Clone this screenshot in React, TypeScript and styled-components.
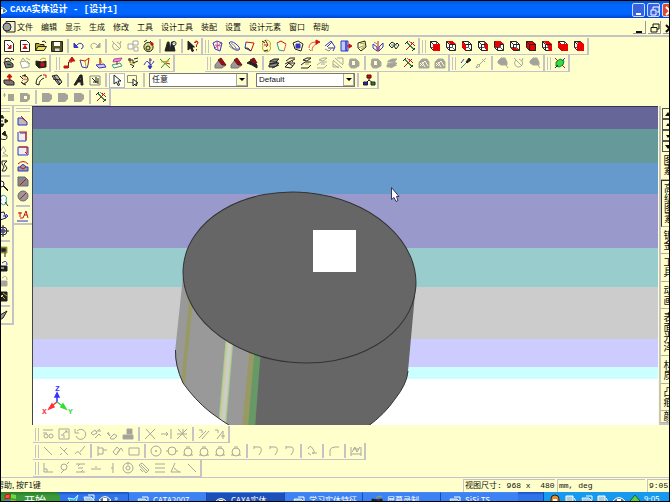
import React from "react";
import styled, { createGlobalStyle, css } from "styled-components";

const cream = "#ffffcc";
const edge = "#c6c3c6";
const cjk = `"Noto Sans CJK SC", sans-serif`;

const GlobalStyle = createGlobalStyle`
  * { box-sizing: border-box; }
  body { margin: 0; background: #000; overflow: hidden; }
  button, select { font: inherit; color: inherit; margin: 0; padding: 0; border: 0; background: none; border-radius: 0; }
`;

/* ---------- icons: [stroke, fill, path] on a 14 x 14 grid ---------- */
type Shape = [string, string, string];
const K = "#222222";
const R = "#cc1111";
const B = "#3333cc";
const G = "#888888";
const Y = "#b5a520";
const M = "#7a1020";
const C = "#2a9aa5";
const O = "#ee5544";
const N = "none";
const W = "#ffffff";

const wire: Shape = [K, N, "M2.500 2.500H8.500L11.500 5.500V11.500H5.500L2.500 8.500ZM2.500 2.500L5.500 5.500H11.500M5.500 5.500V11.500"];
const cube = (...faces: string[]): Shape[] => [
  [N, W, "M2 2H8L12 5V12H6L2 8Z"],
  ["#555555", N, "M8.500 2.500V8.500H2.500M8.500 8.500L11.500 11.500"],
  wire,
  ...faces.map((d): Shape => [N, "#ee0000", d]),
];
const front = "M5 5H12V12H5Z";
const top = "M3 2H8L12 5H6Z";
const left = "M2 3L6 6V12L2 8Z";
const right = "M9 3L12 6V12L9 9Z";
const back = "M3 3H8V8H3Z";
const base = "M3 9H8L11 11H6Z";

const icons: Record<string, Shape[]> = {
  newPart: [[K, W, "M2.5 1.5H8.5L11.5 4.5V12.5H2.5Z"], [R, R, "M5 5L9 9M9 6V9.500H6Z"]],
  newDraw: [[K, W, "M2.5 1.5H8.5L11.5 4.5V12.5H2.5Z"], [R, R, "M4.500 5.500H9.500M7 5V10M5 9.500H9L7 7Z"]],
  open: [[K, Y, "M1.5 11.5V4.5H5L6 5.5H10V7"], [K, "#e8e060", "M1.5 11.5L4 7.500H12.5L10 11.5Z"], [K, N, "M8 2.5Q11 1 12 4"]],
  save: [[K, "#555522", "M1.5 2.5H12.5V12.5H1.5Z"], [N, W, "M4 3H10V7H4Z"], [N, "#ddd", "M5 9.500H9.500V12H5Z"]],
  undo: [[B, N, "M4 7Q8 2 11 6Q12 9 9 10"], [B, B, "M2 4V8.500H6Z"]],
  redo: [[G, N, "M10 7Q6 2 3 6Q2 9 5 10"], [G, G, "M12 4V8.500H8Z"]],
  spin: [[G, N, "M4 4A4 4 0 1 0 10 5M2 2L7 7M6 6L10 10M7 3L10 5L11 2"]],
  boxes: [[G, W, "M2 5H7V10H2ZM7 2H12V6H7ZM8 8H12V12H8Z"]],
  camera: [[K, "#dddd88", "M3 5A4 4 0 1 1 10 11A4 4 0 1 1 3 5"], [K, N, "M4 9A2 2 0 1 0 8 9A2 2 0 1 0 4 9M2 3L5 1M8 2L11 5"], [R, R, "M9 4H11V6H9Z"]],
  docIcon: [[K, "#f4f4d0", "M4 1.500H13V12H4Z"], [K, "#99a0cc", "M1 7A4 4 0 1 1 9 7A4 4 0 1 1 1 7"], [Y, N, "M3 6L7 9M3 9L7 5"]],
  find: [[K, K, "M1 12L3.500 3H5L6 12ZM6 12L7.500 3H9L11 12Z"], [K, W, "M8 4A2 2 0 1 1 12 5A2 2 0 1 1 8 4"], [C, N, "M9 4H11"]],
  help: [[K, K, "M2 2V11L4.500 9L6 12.500L7.500 12L6 8H8.500Z"], [R, N, "M8.500 4Q9 1.500 11 2Q13.500 3.500 10.500 6V8M10.500 10V11.500M9 4Q9.500 2 12 3"]],
  sheet: [[B, N, "M2 4L6 2L11 4L9 12L4 10Z"], ["#cc44aa", N, "M4 6L10 7M6 3L7 11M4 9L10 4"]],
  loops: [[B, N, "M2 4Q4 1 9 5T12 11Q9 12 7 10T2 4"], [G, N, "M4 4Q8 6 10 11M2 7L6 10H12"]],
  page: [[R, N, "M3 3L11 4L8 12"], [B, N, "M3 3L2 9L8 12"], [K, N, "M2 9Q5 8 8 12"]],
  swirl: [[Y, N, "M4 7A4 4 0 1 0 11 7A4 4 0 1 0 4 7"], [R, N, "M5 6H9M8 4L9 6L7 8"], [K, N, "M3 2L6 4M6 1L8 4M9 11L5 12"]],
  open2: [[R, N, "M2 4L6 2L11 5"], [C, N, "M2 4L4 11L9 12"], [O, N, "M11 5L9 12"]],
  dot: [[K, N, "M2 4L7 2L12 5L10 12L4 10Z"], [B, B, "M5 5H9V9H5Z"]],
  arc: [[O, N, "M2 9Q2 3 9 3M5 12Q5 6 10 5"], [R, R, "M9 1L13 3L9 5Z"], [G, N, "M2 10L4 12"]],
  planes: [[B, N, "M2 7L8 2L12 8L10 12M4 8L9 3M5 9L11 9"], [G, N, "M2 10L6 12L10 8"]],
  door: [[B, "#bbccff", "M2 2H7V12H2ZM7 2H9V12H7Z"], [R, R, "M8 7H11M10 5L13 7L10 9Z"]],
  fold: [[K, N, "M3 4L10 2L11 8L6 12L3 9Z"], [Y, N, "M5 5L9 4L9 8L6 10"], [G, N, "M3 9L8 7"]],
  mirror: [[B, N, "M2 5L6 8V12L2 9ZM8 8L12 4V8L8 12Z"], [R, N, "M7 2V13"], [G, N, "M3 3L6 5"]],
  link: [[K, N, "M2 6L5 3L8 5L5 9ZM7 7L10 4L12 6L9 10Z"], [C, N, "M4 6H10"]],
  tools: [["#2a8a55", N, "M3 3L11 11M4 3L12 11"], [R, N, "M11 3L3 11M8 3L12 7"], [K, N, "M2 5L5 2M9 12L12 9"], [O, N, "M6 2L9 5"]],
  c1: cube(front), c2: cube(top), c3: cube(left), c4: cube(right), c5: cube(back, top), c6: cube(base),
  c7: [[N, "#ee0000", "M2 2H8L12 5V12H6L2 8Z"], wire], c8: cube(top, "M7 6H12V12H9Z"), c9: cube(left, front), c10: cube(front, "M9 3L12 5H6L5 3Z"),
  bag: [[K, "#777", "M2 6L7 5L11 8V11L4 12Z"], [K, N, "M3 5Q2 2 5 2T9 5M9 2L12 4M5 8L9 9"]],
  bagOff: [[G, W, "M2 6L7 5L11 8V11L4 12Z"], [G, N, "M3 5L5 2L8 6M8 2L12 4M9 5L12 8"]],
  bagRed: [[K, K, "M2 5L8 6L12 5V11L5 12L2 9Z"], [R, R, "M7 7H10V10H7Z"], [Y, N, "M6 4L9 2L12 3"]],
  step: [[M, N, "M3 10.500H6.500V6H10V4M3 11.500H7"], [R, R, "M2 10H6V12H2ZM7 5L10 1L13 5Z"]],
  sheetR: [[R, N, "M2 4L7 5L11 2M11 2L10 9"], [B, N, "M2 4L4 11L9 12L10 9"], [Y, N, "M7 5L8 11"]],
  knife: [[B, "#ccccff", "M2 9L10 8L12 11L5 12Z"], [Y, N, "M6 9V2L8 7"], [R, N, "M6 2V9"]],
  stack: [["#bb44aa", "#dd99cc", "M4 3L12 2L10 5L3 6Z"], [C, N, "M2 9L10 7L12 10L4 12Z"], [R, N, "M7 5V9"]],
  net: [[K, N, "M2 4H7V7L12 5M4 8L8 10L6 12M8 3L12 2M4 2V6"], [Y, N, "M3 6L9 8"], [R, N, "M2 3H4"]],
  axis: [[B, N, "M2 9Q5 3 7 7T12 5M8 2V12"], [B, B, "M6 10H10L8 13Z"], [R, N, "M7 4H10"]],
  cutx: [["#3a8a22", N, "M2 3L12 12M12 2L3 12"], [Y, N, "M3 6L11 5"], [R, N, "M8 7L12 8"]],
  wedge: [["#777", "#999", "M2 9L6 4L13 9L9 12H2Z"], [M, "#9a1111", "M5 4L8 2L13 9L9 9Z"]],
  wedgeK: [[K, K, "M2 7L7 4L12 9V12L7 9Z"], [M, M, "M5 4L9 2L12 7L8 7Z"]],
  layers: [[K, "#888", "M2 9L6 7H12L8 11H2ZM3 5L7 3H12L9 6H3Z"], [K, N, "M2 7L5 8L11 6M5 12L12 9"]],
  layersR: [[K, N, "M2 11L6 7H12L8 12ZM3 5L7 2H12M2 8L12 3M4 6L10 10"], [R, N, "M8 4L10 6"]],
  layersL: [[K, N, "M2 12H9L12 9M2 9L6 6H12M4 4L8 2H12L8 5Z"], [Y, N, "M6 8H10"]],
  hatch: [[G, N, "M2 4L11 12M4 2L12 9M2 8L8 12M6 2H12V8M2 5V11H8"]],
  blob: [[G, "#aaa", "M3 3H9L12 6V10L8 12H4L2 9Z"], [N, cream, "M5 5H8V9H5Z"]],
  poly: [[G, "#aaa", "M2 6L5 3H10L12 6V12H2Z"], [cream, N, "M3 7L6 10M5 6L8 11M8 5L11 10M3 10L8 5"]],
  dropper: [[K, K, "M8 6L11 2L13 4L9 7Z"], [C, N, "M8 7L3 12"], [B, N, "M6 3L3 7"]],
  brush: [[G, N, "M12 2L5 9M4 8L6 10L2 12ZM8 3L11 6"]],
  pill: [[G, "#aaa", "M2 5L5 2H9L11 6V9H5L2 7Z"], [G, N, "M10 9L12 12"]],
  green: [["#118822", "#33dd44", "M3 6L7 3L11 5L10 9L6 11L3 10Z"], [R, N, "M2 2L5 5M12 12L9 9"], [B, N, "M12 2L9 5"], [K, N, "M2 12L5 9"]],
  extrude: [[K, "#777", "M2 7H9L12 9V12H5L2 10Z"], [R, R, "M7 8V4H5L7.500 1L10 4H8V8Z"]],
  spinY: [[K, "#eee8aa", "M4 3A4 4 0 1 1 3 9Q4 11 8 12"], [O, N, "M4 8Q7 4 10 8"], [K, N, "M2 3L5 6M7 1V4"]],
  sweep: [[K, N, "M2 11Q2 4 8 2M5 12Q5 7 10 5M2 11L5 12"], [R, N, "M9 2H12V5"]],
  loft: [[K, "#bbb", "M2 3L7 2L12 9L9 12Z"], [K, N, "M4 3L10 11M3 6L11 7"]],
  letterA: [[K, K, "M2 12L8 2H10L11 12H9V9H6L4 12ZM7 7H9V4Z"]],
  ruler: [[G, N, "M2 3H12V12H2Z"], [K, N, "M4 5L8 9M8 4V10M5 9H10M10 5V11"]],
  pick: [[K, W, "M4 2V11L6.500 9L8 12.500L9.500 12L8 8H11Z"]],
  pickBox: [[G, N, "M1.500 2.500H10.500V9.500H1.500Z"], [K, W, "M7 6V13L9 11L10 13L11 12L10 10H12Z"]],
  tree: [[K, N, "M7 5V7M7 7L4 10M7 7L11 10"], ["#660000", R, "M5 2H9V5H5Z"], [K, "#2222cc", "M1.500 9H5.500V12H1.500Z"], [K, "#228833", "M9 9H13V12H9Z"]],
  plusBox: [[G, N, "M1 5H4M2.500 3V7"], [N, "#999", "M6 4H12V11H6Z"]],
  solidD: [[N, "#999", "M2 3H9L12 5V9L9 12H2Z"], [N, cream, "M6 6H9V9H6Z"]],
  solid: [[N, "#999", "M2 3H9L12 5V9L9 12H2Z"]],
  move: [[K, K, "M7 1L9 4H5ZM7 13L5 10H9ZM1 7L4 5V9ZM13 7L10 9V5Z"], [K, N, "M6 7H8"]],
  orbit: [[K, N, "M3 9Q13 13 12 7Q11 4 8 5"], [K, K, "M10 2L7 5L11 7Z"]],
  walk: [[G, N, "M8 2L11 7L8 9L13 12H7M8 3L4 10"]],
  twist: [[K, N, "M7 2H12L9 5L12 9L10 12H7L9 8L7 5Z"]],
  zoom: [[K, W, "M3 5A3 3 0 1 1 9 5A3 3 0 1 1 3 5"], [K, N, "M8 7L13 12M9 7L13 11"]],
  zoomBox: [[G, N, "M4 2H9V7H4Z"], [C, W, "M6 6A3 3 0 1 1 11 6A3 3 0 1 1 6 6"], [K, N, "M10 8L13 12"]],
  fit: [[K, "#eee", "M3 4L9 3L11 9L5 11Z"], [B, N, "M8 7H13M11 5L13 7L11 9"]],
  center: [[K, N, "M4 7A4 4 0 1 1 12 7A4 4 0 1 1 4 7M8 1V13M2 7H14"], [B, N, "M6 7A2 2 0 1 1 10 7A2 2 0 1 1 6 7"]],
  mark: [[Y, "#555", "M4 3H12V9H4Z"], [K, K, "M7 5H10V7H7Z"], [K, N, "M10 9V13"]],
  lock: [[K, K, "M4 7H12V12H4Z"], [B, N, "M7 4Q12 0 12 6"], [W, N, "M6 9H9"]],
  disk: [[K, K, "M4 3H12V12H4Z"], [Y, N, "M5 5L10 10M8 4L12 7"], [W, N, "M5 9L8 6"]],
  leaf: [[K, "#999", "M3 12L5 6L12 2L8 9Z"]],
  sk1: [[B, "#bbb", "M2 11V4H6L11 8V11Z"], [R, N, "M5 2L11 8"]],
  sk2: [[B, "#eee", "M4 4H10V12H2V3"], [R, N, "M3 3H11M10 3V11"]],
  sk3: [[B, "#eee", "M2 3H12V11H2Z"], [R, N, "M3 3H11V9M11 10L9 8"]],
  sk4: [[B, "#999", "M2 8H4Q7 3 10 8H12V12H2Z"], [R, N, "M2 5Q7 0 12 5M4 8L7 10L10 8"]],
  sk5: [["#666677", "#888", "M2 3H9L12 6V12H2Z"], [R, N, "M4 11L10 5"]],
  sk6: [["#666677", "#999", "M2 7A5 5 0 1 1 12 7A5 5 0 1 1 2 7"], [R, N, "M4 10L10 4"]],
  sk7: [[R, N, "M2 4H6M4 3V8M4 9H7L10 2L12 9M8 6H11"], [B, N, "M1 12H12"]],
  g1: [[G, N, "M2 3H12M2 6H6M3 9A2 2 0 1 0 7 9A2 2 0 1 0 3 9M8 9A2 2 0 1 0 12 9A2 2 0 1 0 8 9"]],
  g2: [[G, N, "M2 2H12V12H2ZM4 8H7V11M6 7L10 4M8 4H10V6"]],
  g3: [[G, N, "M4 4A5 5 0 1 1 3 9M2 2V6H6"]],
  g4: [[G, N, "M2 6L6 3L8 6L4 8ZM7 5L11 2M6 11L10 7L12 9M9 4H12"]],
  g5: [[G, N, "M2 6L5 9L3 5M5 11L9 7L12 9L9 12H6Z"]],
  g6: [[G, "#999", "M6 2H11V7H6ZM2 8H12V12H2Z"]],
  x: [[G, N, "M3 2L12 12M12 2L2 12"]],
  extend: [[G, N, "M2 7H9M7 5L9 7L7 9M12 2V12"]],
  xx: [[G, N, "M3 2L12 12M12 2L2 12M2 7H12M8 2V7"]],
  h1: [[G, N, "M2 3H5V6M5 12L12 4M2 11L9 4"]],
  h2: [[G, N, "M2 3H5V6M4 12L10 4V12M8 9H12"]],
  line: [[G, N, "M3 3L11 11"]],
  tang: [[G, N, "M3 3L11 11M7 7L10 4M3 11L5 9"]],
  perp: [[G, N, "M12 2L7 8M2 10Q5 5 8 11"]],
  chain: [[G, N, "M3 2V12M3 4H8V10H3M8 6H12"]],
  chain2: [[G, N, "M2 8L6 3L9 6L5 11ZM6 9L10 4L12 7"]],
  rect: [[G, N, "M2 4H12V11H2Z"]],
  circ: [[G, N, "M2 7A5 5 0 1 1 12 7A5 5 0 1 1 2 7M6 7H8M7 6V8"]],
  circ2: [[G, N, "M3 7A4 4 0 1 1 11 7A4 4 0 1 1 3 7M1 7H4M10 7H13"]],
  circ3: [[G, N, "M3 8A4 4 0 1 1 11 8A4 4 0 1 1 3 8M5 3H9M2 11H5M9 11H12"]],
  hook: [[G, N, "M3 3H9Q12 6 8 11M3 2V5"]],
  wave: [[G, N, "M3 5Q5 0 8 5T7 9H12M3 9L6 11"]],
  corner: [[G, N, "M3 12V6Q4 3 8 3H12"]],
  meas: [[G, N, "M2 3V12M12 3V12M2 10H12M3 8L6 3L8 8L11 3M4 5H10"]],
  ell: [[G, N, "M3 2V11H12M3 8H6V11"]],
  pin: [[G, N, "M4 6A3 3 0 1 1 10 6A3 3 0 1 1 4 6M7 9L4 12M10 3L12 1"]],
  sym: [[G, N, "M3 3H12M3 11H12M5 7H10M7 3L5 5M8 11L10 9"]],
  dash: [[G, N, "M2 8H12M6 6H8"]],
  vert: [[G, N, "M8 2V12M6 7H8"]],
  ring: [[G, N, "M2 7A5 5 0 1 1 12 7A5 5 0 1 1 2 7M5 7A2 2 0 1 1 9 7A2 2 0 1 1 5 7M7 1V4"]],
  pair: [[G, N, "M2 4L5 2L12 9L9 12ZM4 4L10 10M3 8L6 11"]],
  eq: [[G, N, "M2 3H12M2 7H12M2 11H12"]],
  ang: [[G, N, "M6 2L2 11H12M5 7L10 11"]],
  start: [[R, O, "M1 3L6 2V6L1 7Z"], [N, "#66dd44", "M7 2L12 3V7L7 6Z"], ["#3388ff", "#3388ff", "M1 9L5 8V12L1 13Z"], [Y, "#ffdd33", "M7 8L12 9V13L7 12Z"]],
  bird: [["#bbeeff", "#33bbee", "M2 6L8 7L12 3L10 10L5 11Z"]],
  app: [["#ddeeff", "#99ccee", "M2 5H9L12 8V12H4Z"], [W, N, "M6 3H12V7"]],
  eye: [[W, "#557799", "M1 8Q7 1 13 8Q7 13 1 8"], [N, W, "M5 6H9V10H5Z"]],
  user: [[K, "#ee8822", "M3 12V6A4 4 0 1 1 11 6V12Z"], [N, W, "M5 6H9V9H5Z"]],
  box: [[W, "#aaccdd", "M2 3H9V10H2Z"], [W, N, "M10 5Q13 7 10 11"]],
  gem: [["#116622", "#66cc44", "M2 8L7 2L12 8L7 13Z"]],
};

const Svg = styled.svg`
  display: block;
  width: 14px;
  height: 14px;
  flex: none;
`;

function Icon({ name, muted }: { name: string; muted?: boolean }) {
  return (
    <Svg viewBox="0 0 14 14" aria-hidden="true">
      {(icons[name] || []).map(([stroke, fill, d], i) => (
        <path
          key={i}
          d={d}
          stroke={muted && stroke !== N && stroke !== cream ? "#a9a99b" : stroke}
          fill={muted && fill !== N && fill !== cream && fill !== W ? "#a3a39c" : fill}
          strokeWidth="1"
        />
      ))}
    </Svg>
  );
}

/* ---------- frame ---------- */
const Window = styled.div`
  display: flex;
  flex-direction: column;
  height: 100vh;
  padding: 1px;
  background: #000;
  color: #111;
  font: 8px/12px ${cjk};
  overflow: hidden;
`;

const TitleBar = styled.header`
  display: flex;
  align-items: center;
  gap: 2px;
  height: 17px;
  flex: none;
  background: linear-gradient(#0058d8 0, #0066ff 4px, #0066ff 13px, #0044cc 17px);
  color: #fff;
`;

const Title = styled.h1`
  flex: 1;
  margin: 0;
  font: bold 9px/14px "Liberation Mono", "Noto Sans CJK SC", monospace;
  white-space: pre;
`;

const Crop = styled.span`
  width: 7px;
  display: flex;
  justify-content: flex-end;
  overflow: hidden;
`;

const CaptionButtons = styled.div`
  display: flex;
  gap: 2px;
  width: 37px;
  overflow: hidden;
`;

const CaptionButton = styled.button<{ $close?: boolean }>`
  display: grid;
  place-items: center;
  width: 13px;
  height: 14px;
  flex: none;
  overflow: hidden;
  border: 1px solid #cfdcff;
  border-radius: 2px;
  background: ${(p) => (p.$close ? "#e04a2a" : "#3a62dc")};
`;

const MenuBar = styled.nav`
  display: flex;
  align-items: center;
  gap: 8px;
  height: 19px;
  flex: none;
  padding-left: 1px;
  background: ${cream};
  border-top: 1px solid #fff;
  border-bottom: 2px solid ${edge};
`;

const MenuItem = styled.button`
  white-space: nowrap;
`;

const MenuIcon = styled.span`
  width: 7px;
  display: flex;
`;

const DocButtons = styled.div`
  display: flex;
  gap: 2px;
  width: 36px;
  margin-left: auto;
  overflow: hidden;
`;

const DocButton = styled.button`
  width: 13px;
  height: 13px;
  flex: none;
  display: grid;
  place-items: center;
  border: solid #999;
  border-width: 0 1px 1px 0;
`;

/* ---------- toolbars ---------- */
const Dock = styled.div`
  background: ${cream};
  flex: none;
  padding-top: 1px;
`;

const DockRow = styled.div`
  display: flex;
  height: 17px;
`;

const Bar = styled.div<{ $gap?: number }>`
  display: flex;
  align-items: center;
  height: 17px;
  flex: none;
  margin-right: ${(p) => p.$gap ?? 0}px;
  border-right: 2px solid ${edge};
  border-bottom: 1px solid ${edge};
`;

const Grip = styled.span<{ $flat?: boolean }>`
  flex: none;
  ${(p) =>
    p.$flat
      ? css`width: 14px; height: 4px; margin: 2px 0 1px; border-width: 1px 0;`
      : css`width: 4px; height: 13px; margin: 0 1px 0 2px; border-width: 0 1px;`}
  border-style: solid;
  border-color: ${edge};
`;

const Separator = styled.span<{ $flat?: boolean }>`
  flex: none;
  background: ${edge};
  ${(p) => (p.$flat ? css`width: 14px; height: 2px; margin: 2px 0 1px;` : css`width: 2px; height: 14px; margin: 0 2px;`)}
`;

const Tool = styled.button<{ $on?: boolean }>`
  display: grid;
  place-items: center;
  flex: none;
  width: 16px;
  height: 15px;
  ${(p) => p.$on && css`box-shadow: inset 0 0 0 1px #bbb; background: #fffff0;`}
`;

/* "|" is a separator, "-name" a disabled tool, "*name" a pressed one */
function Tools({ list, flat }: { list: string; flat?: boolean }) {
  return (
    <>
      {list.split(" ").map((item, i) => {
        if (item === "|") return <Separator key={i} $flat={flat} />;
        const off = item[0] === "-";
        const on = item[0] === "*";
        const name = off || on ? item.slice(1) : item;
        return (
          <Tool key={i} type="button" aria-label={name} disabled={off} $on={on}>
            <Icon name={name} muted={off} />
          </Tool>
        );
      })}
    </>
  );
}

const Field = styled.label<{ $gap: number }>`
  position: relative;
  display: block;
  width: 99px;
  height: 14px;
  margin-left: ${(p) => p.$gap}px;
  border: 1px solid #777;
  background: #fff;
`;

const Select = styled.select`
  display: block;
  appearance: none;
  width: 100%;
  height: 12px;
  padding: 0 12px 0 2px;
  font: 8px/12px "Liberation Sans", "Noto Sans CJK SC", sans-serif;
`;

const Arrow = styled.span`
  position: absolute;
  right: 0;
  top: 0;
  display: grid;
  place-items: center;
  width: 11px;
  height: 12px;
  pointer-events: none;
  background: ${cream};
  border: 1px solid #aaa;
  border-width: 0 1px 1px 1px;
  &::after {
    content: "";
    border: 3px solid transparent;
    border-top-color: #000;
    border-bottom: 0;
  }
`;

/* ---------- workspace ---------- */
const Work = styled.main`
  display: flex;
  flex: 1;
  min-height: 0;
  background: ${cream};
`;

const SideBar = styled.div<{ $clipped?: boolean }>`
  display: flex;
  flex-direction: column;
  align-items: ${(p) => (p.$clipped ? "flex-end" : "center")};
  align-self: flex-start;
  width: ${(p) => (p.$clipped ? 13 : 18)}px;
  flex: none;
  overflow: hidden;
  padding-right: ${(p) => (p.$clipped ? 2 : 0)}px;
  border-right: ${(p) => (p.$clipped ? `2px solid ${edge}` : "0")};
  border-bottom: 2px solid ${edge};
`;

const Viewport = styled.section`
  flex: 1;
  min-width: 0;
  border-top: 1px solid #333355;
  border-left: 1px solid #444;
  background: linear-gradient(
    #666699 22px, #669999 22px 56px, #6699cc 56px 87px, #9999cc 87px 141px,
    #99cccc 141px 180px, #cccccc 180px 232px, #ccccff 232px 260px, #ccffff 260px 272px, #ffffff 272px
  );
`;

const Scene = styled.svg`
  display: block;
  width: 100%;
  height: 100%;
`;

const Catalog = styled.aside`
  display: flex;
  flex-direction: column;
  width: 10px;
  margin-left: 1px;
  padding-top: 2px;
  flex: none;
  overflow: hidden;
  border-left: 2px solid ${edge};
  border-bottom: 2px solid ${edge};
`;

const ScrollButton = styled.button`
  display: grid;
  place-items: center;
  width: 12px;
  height: 11px;
  margin-left: 1px;
  flex: none;
  overflow: hidden;
  border: 1px solid #555;
  background: ${cream};
`;

const ScrollArrow = styled.svg`
  width: 8px;
  height: 6px;
`;

const Tab = styled.button<{ $active?: boolean; $size: number }>`
  flex: 0 1 ${(p) => p.$size}px;
  width: 16px;
  padding-right: 2px;
  overflow: hidden;
  writing-mode: vertical-rl;
  font-size: 10px;
  line-height: 12px;
  text-align: center;
  white-space: nowrap;
  border-bottom: 1px solid #b5b298;
  ${(p) => p.$active && css`border-top: 1px solid #333; border-left: 1px solid #333;`}
`;

function Model() {
  return (
    <Scene viewBox="33 107 625 319" preserveAspectRatio="xMinYMin slice" role="img" aria-label="3D">
      <defs>
        <clipPath id="side">
          <path d="M183 276L175 352Q175 366 183 383Q195 400 210 412Q222 421 232 427H367Q385 414 395 399Q407 384 408 371L416 283Z" />
        </clipPath>
      </defs>
      <g clipPath="url(#side)">
        <path fill="#999999" d="M170 260H270V430H170Z" />
        <path fill="#999966" d="M189 300H193L185 384H181ZM250 345H256L249 427H242Z" />
        <path fill="#99cc99" d="M226 335H234L226 427H218Z" />
        <path fill="#cccc99" d="M227 335H233L225 427H219Z" />
        <path fill="#cccccc" d="M229 335H232L224 427H221Z" />
        <path fill="#669966" d="M255 345H262L255 427H248Z" />
        <path fill="#666666" d="M262 335L255 427H420V260H300Z" />
      </g>
      <path fill="none" stroke="#333333" d="M175.500 350Q175 366 183 383Q195 400 210 412Q222 421 232 427M367 427Q385 414 395 399Q407 384 408 371" />
      <ellipse cx="299.5" cy="277.5" rx="116.700" ry="85.200" transform="rotate(5.400 299.5 277.5)" fill="#666666" stroke="#333333" />
      <path fill="#ffffff" d="M313 230H356V272H313Z" />
      <path fill="#ffffff" stroke="#333366" d="M391.5 187.5V199.5L394 197.500L396 201.500L398 200.500L396.500 196.500H399Z" />
      <g strokeWidth="1.500">
        <path stroke="#3333ff" fill="#3333ff" d="M57 402V394M55 397L57 393L59 397Z" />
        <path stroke="#ff3333" fill="#ff3333" d="M57 402L49 408M52 404L49 409L54 407Z" />
        <path stroke="#33dd33" fill="#33dd33" d="M57 402L65 408M61 407L66 409L63 404Z" />
      </g>
      <g fontFamily="Liberation Mono, monospace" fontWeight="bold" fontSize="8">
        <text x="55" y="391" fill="#3333ff">Z</text>
        <text x="42" y="414" fill="#ff3333">X</text>
        <text x="68" y="414" fill="#33dd33">Y</text>
      </g>
    </Scene>
  );
}

/* ---------- bottom ---------- */
const BottomDock = styled(Dock)`
  padding-left: 32px;
`;

const StatusBar = styled.footer`
  display: flex;
  align-items: center;
  height: 15px;
  flex: none;
  overflow: hidden;
  border-top: 1px solid ${edge};
  background: ${cream};
  white-space: pre;
`;

const Message = styled.span`
  flex: 1;
  display: flex;
  min-width: 0;
  margin-left: -5px;
`;

const Cell = styled.span<{ $w: number }>`
  width: ${(p) => p.$w}px;
  height: 13px;
  flex: none;
  margin-left: 2px;
  padding-left: 1px;
  overflow: hidden;
  font: 8px/12px "Liberation Mono", "Noto Sans CJK SC", monospace;
  border-top: 1px solid ${edge};
  border-left: 1px solid ${edge};
`;

const TaskBar = styled.nav`
  display: flex;
  height: 9px;
  flex: none;
  overflow: hidden;
  background: linear-gradient(#1c50c0, #2f74ea 3px);
  color: #fff;
  line-height: 12px;
`;

const Start = styled.button`
  display: flex;
  align-items: flex-start;
  gap: 6px;
  width: 59px;
  height: 16px;
  padding-left: 3px;
  margin-right: 6px;
  overflow: hidden;
  border-radius: 0 5px 5px 0;
  background: linear-gradient(#2a7a2a, #3a9a3a 4px);
  font-size: 11px;
  line-height: 16px;
`;

const Quick = styled.div`
  display: flex;
  gap: 2px;
  width: 62px;
  flex: none;
`;

const Task = styled.button<{ $active?: boolean }>`
  display: flex;
  gap: 3px;
  flex: 0 1 78px;
  height: 16px;
  padding: 1px 0 0 7px;
  overflow: hidden;
  white-space: nowrap;
  border-left: 1px solid #1c48b0;
  border-top: 1px solid #4a88f4;
  background: ${(p) => (p.$active ? "#1c4fb8" : "#3c82f4")};
`;

const Tray = styled.div`
  display: flex;
  gap: 2px;
  width: 126px;
  flex: none;
  margin-left: auto;
  padding: 1px 0 0 4px;
  background: #159aef;
  border-left: 1px solid #0b4aa8;
`;

const tabs: [string, number][] = [
  ["图素", 28], ["高级图素", 48], ["钣金", 28], ["工具", 28], ["动画", 28], ["表面光泽", 48], ["材质", 28], ["凸痕", 28], ["颜色", 12],
];

export default function App() {
  return (
    <>
      <GlobalStyle />
      <Window>
        <TitleBar>
          <Crop><Icon name="eye" /></Crop>
          <Title>CAXA实体设计 - [设计1]</Title>
          <CaptionButtons>
            <CaptionButton type="button" aria-label="最小化">
              <Svg viewBox="0 0 14 14"><path d="M3 10H8" stroke="#fff" strokeWidth="2" /></Svg>
            </CaptionButton>
            <CaptionButton type="button" aria-label="还原">
              <Svg viewBox="0 0 14 14"><path d="M5 6V3H11V8H9M3 6H8V11H3Z" fill="none" stroke="#fff" /></Svg>
            </CaptionButton>
            <CaptionButton type="button" aria-label="关闭" $close>
              <Svg viewBox="0 0 14 14"><path d="M3 3L11 11M11 3L3 11" stroke="#fff" strokeWidth="2" /></Svg>
            </CaptionButton>
          </CaptionButtons>
        </TitleBar>

        <MenuBar>
          <MenuIcon><Icon name="docIcon" /></MenuIcon>
          {["文件", "编辑", "显示", "生成", "修改", "工具", "设计工具", "装配", "设置", "设计元素", "窗口", "帮助"].map((m) => (
            <MenuItem key={m} type="button">{m}</MenuItem>
          ))}
          <DocButtons>
            <DocButton type="button" aria-label="最小化">
              <Svg viewBox="0 0 14 14"><path d="M3 11H9" stroke="#111" strokeWidth="2" /></Svg>
            </DocButton>
            <DocButton type="button" aria-label="还原">
              <Svg viewBox="0 0 14 14"><path d="M5 6V3H11V8H9M3 6.500H9V11H3Z" fill="none" stroke="#111" /></Svg>
            </DocButton>
            <DocButton type="button" aria-label="关闭">
              <Svg viewBox="0 0 14 14"><path d="M3 4L10 11M10 4L3 11" stroke="#111" strokeWidth="2" /></Svg>
            </DocButton>
          </DocButtons>
        </MenuBar>

        <Dock>
          <DockRow>
            <Bar><Tools list="newPart newDraw open save | undo -redo | -spin -boxes camera | find | help" /></Bar>
            <Bar><Grip /><Tools list="sheet loops page swirl open2 dot arc planes door fold mirror link tools" /></Bar>
            <Bar><Grip /><Tools list="c1 c2 c3 c4 c5 c6 c7 c8 c9 c10" /></Bar>
          </DockRow>
          <DockRow>
            <Bar $gap={3}><Tools list="bag -bagOff bagRed" /></Bar>
            <Bar $gap={30}><Grip /><Tools list="step sheetR knife stack net axis cutx" /></Bar>
            <Bar>
              <Grip />
              <Tools list="wedge wedge wedgeK | layers layersR layersL -layersL -hatch -blob | -blob -layers tools -poly -poly" />
            </Bar>
            <Bar><Grip /><Tools list="dropper -brush | -pill -spin -pill" /></Bar>
            <Bar><Grip /><Tools list="green" /></Bar>
          </DockRow>
          <DockRow>
            <Bar>
              <Tools list="extrude spinY sweep loft | letterA ruler | *pick pickBox |" />
              <Field $gap={2}>
                <Select aria-label="选择过滤" defaultValue="任意"><option>任意</option></Select>
                <Arrow />
              </Field>
              <Field $gap={8}>
                <Select aria-label="样式" defaultValue="Default"><option>Default</option></Select>
                <Arrow />
              </Field>
              <Separator />
              <Tools list="tree" />
            </Bar>
          </DockRow>
          <DockRow>
            <Bar><Tools list="-plusBox -solidD | -solid -solid -solid | tools" /></Bar>
          </DockRow>
        </Dock>

        <Work>
          <SideBar $clipped>
            <Grip $flat />
            <Tools flat list="move orbit -walk twist | zoom zoomBox fit center | mark lock -lock disk | leaf" />
          </SideBar>
          <SideBar>
            <Grip $flat />
            <Tools flat list="sk1 sk2 sk3 sk4 sk5 sk6 | sk7" />
          </SideBar>
          <Viewport><Model /></Viewport>
          <Catalog>
            {["M1 5H7L4 1Z", "M2 4H6L4 1Z", "M2 2H6L4 5Z", "M1 1H7L4 5Z"].map((d) => (
              <ScrollButton key={d} type="button" aria-label="滚动">
                <ScrollArrow viewBox="0 0 8 6"><path d={d} fill="#111" /></ScrollArrow>
              </ScrollButton>
            ))}
            {tabs.map(([name, size], i) => (
              <Tab key={name} type="button" $size={size} $active={i === 1}>{name}</Tab>
            ))}
          </Catalog>
        </Work>

        <BottomDock>
          <DockRow>
            <Bar><Grip /><Tools list="-g1 -g2 -g3 -g4 -g5 -g6 | -x -extend -xx | -h1 -h2" /></Bar>
          </DockRow>
          <DockRow>
            <Bar>
              <Grip />
              <Tools list="-line -tang -perp | -chain -chain2 -rect | -circ -circ2 -circ3 -circ3 -circ3 -circ3 | -hook -hook -hook | -wave | -corner | -meas" />
            </Bar>
          </DockRow>
          <DockRow>
            <Bar><Grip /><Tools list="-ell -pin -sym -dash -vert -ring -pair -eq -ang -line" /></Bar>
          </DockRow>
        </BottomDock>

        <StatusBar>
          <Message>帮助, 按F1键</Message>
          <Cell $w={92}>视图尺寸: 968 x  480</Cell>
          <Cell $w={88}>mm, deg</Cell>
          <Cell $w={22}>9:05</Cell>
        </StatusBar>

        <TaskBar>
          <Start type="button"><Icon name="start" />开始</Start>
          <Quick><Icon name="bird" /><Icon name="app" /><Icon name="eye" />»</Quick>
          <Task type="button"><Icon name="app" />CATA2007</Task>
          <Task type="button" $active><Icon name="eye" />CAXA实体</Task>
          <Task type="button"><Icon name="app" />学习实体特征</Task>
          <Task type="button"><Icon name="bagRed" />屏幕录制</Task>
          <Task type="button"><Icon name="app" />SiSi TS</Task>
          <Tray>
            <Icon name="user" /><Icon name="box" /><Icon name="app" /><Icon name="box" /><Icon name="eye" /><Icon name="gem" />9:05
          </Tray>
        </TaskBar>
      </Window>
    </>
  );
}
